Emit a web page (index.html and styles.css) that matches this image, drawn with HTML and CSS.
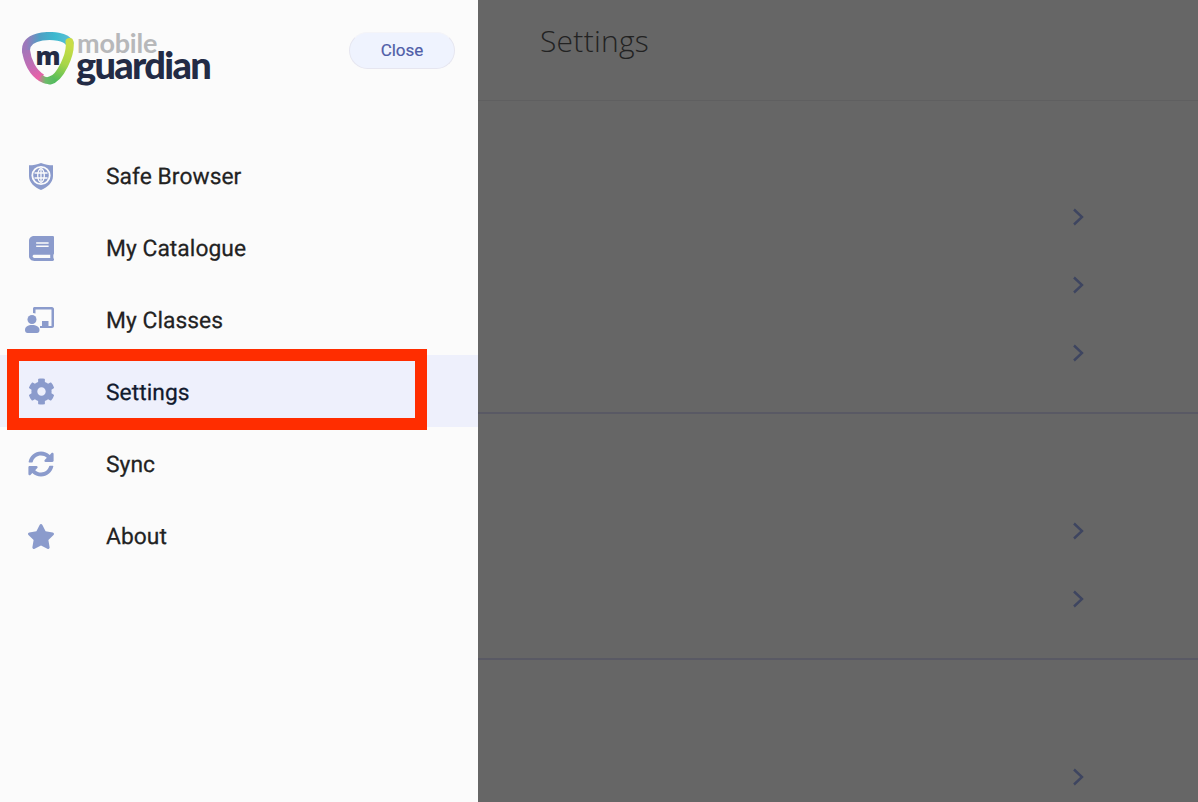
FILE: index.html
```html
<!DOCTYPE html>
<html lang="en">
<head>
<meta charset="utf-8">
<title>Settings</title>
<link rel="stylesheet" href="styles.css">
</head>
<body>
<div class="app">
  <aside class="drawer">
    <header class="drawer-head">
      <div class="logo">
        <div class="mark">
          <svg class="mark-svg" viewBox="0 0 52 53" width="52" height="53" fill="none">
            <defs>
              <linearGradient id="gl" gradientUnits="userSpaceOnUse" x1="5" y1="12" x2="20" y2="46"><stop offset="0" stop-color="#9d78bb"/><stop offset=".6" stop-color="#c26cb4"/><stop offset="1" stop-color="#ee5fa6"/></linearGradient>
              <linearGradient id="gt" gradientUnits="userSpaceOnUse" x1="4" y1="10" x2="48" y2="12"><stop offset="0" stop-color="#9d78bb"/><stop offset=".3" stop-color="#4f9fc4"/><stop offset=".65" stop-color="#3cb9cf"/><stop offset="1" stop-color="#5bbfd4"/></linearGradient>
              <linearGradient id="gr" gradientUnits="userSpaceOnUse" x1="46" y1="12" x2="30" y2="48"><stop offset="0" stop-color="#c9dd45"/><stop offset=".5" stop-color="#a8d648"/><stop offset="1" stop-color="#4fbb5c"/></linearGradient>
              <linearGradient id="gb" gradientUnits="userSpaceOnUse" x1="16" y1="44" x2="36" y2="46"><stop offset="0" stop-color="#ee5fa6"/><stop offset=".4" stop-color="#6dbb6a"/><stop offset="1" stop-color="#4fbb5c"/></linearGradient>
            </defs>
            <path d="M4 19C3.500 10 11 6 20 4.500C30 3 44 4.500 47.500 11" stroke="url(#gt)" stroke-width="8" stroke-linecap="round"/>
            <path d="M4 18C5 29 11 41 20 46" stroke="url(#gl)" stroke-width="8"/>
            <path d="M47.500 10C49.500 22 38 46.500 28 48.500" stroke="url(#gr)" stroke-width="8" stroke-linecap="round"/>
            <path d="M18 45.500C22 48.500 27 50 32 47" stroke="url(#gb)" stroke-width="6.500"/>
          </svg>
          <span class="mark-m">m</span>
        </div>
        <div class="wordmark">
          <span class="word-top">mobile</span>
          <span class="word-bottom">guardian</span>
        </div>
      </div>
      <button class="close-btn" type="button">Close</button>
    </header>
    <nav class="menu">
      <a class="item">
        <span class="item-icon">
          <svg viewBox="0 0 24 27" width="24" height="27">
            <path class="ic" d="M12 0C8 1.800 4 2.200 0 2.300V13C0 20 6 24.500 12 27C18 24.500 24 20 24 13V2.300C20 2.200 16 1.800 12 0Z"/>
            <g fill="none" stroke="#fbfbfb" stroke-width="1.300">
              <circle cx="12" cy="12.500" r="8.700" stroke-width="1.800"/>
              <ellipse cx="12" cy="12.500" rx="3.300" ry="6.800"/>
              <path d="M5.500 10H18.500M5.500 15H18.500M12 5.500V19.500"/>
            </g>
          </svg>
        </span>
        <span class="item-label">Safe Browser</span>
      </a>
      <a class="item">
        <span class="item-icon">
          <svg viewBox="0 0 448 512" width="25" height="25" preserveAspectRatio="none">
            <path class="ic" d="M448 360V24c0-13.300-10.700-24-24-24H96C43 0 0 43 0 96v320c0 53 43 96 96 96h328c13.300 0 24-10.700 24-24v-16c0-7.500-3.500-14.300-8.900-18.700-4.200-15.400-4.200-59.300 0-74.700 5.400-4.300 8.900-11.100 8.900-18.600zM128 134c0-3.300 2.700-6 6-6h212c3.300 0 6 2.700 6 6v20c0 3.300-2.700 6-6 6H134c-3.300 0-6-2.700-6-6v-20zm0 64c0-3.300 2.700-6 6-6h212c3.300 0 6 2.700 6 6v20c0 3.300-2.700 6-6 6H134c-3.300 0-6-2.700-6-6v-20zm253.400 250H96c-17.700 0-32-14.300-32-32 0-17.600 14.400-32 32-32h285.400c-1.900 17.100-1.900 46.900 0 64z"/>
          </svg>
        </span>
        <span class="item-label">My Catalogue</span>
      </a>
      <a class="item">
        <span class="item-icon">
          <svg viewBox="0 0 32 26" width="32" height="26">
            <path class="ic" d="M8 1.500C8 .7 8.700 0 9.500 0H27C28 0 29 1 29 2V19C29 20 28 21 27 21H15V19H26.500V2.500H10.500V6.500C9.700 6.200 8.800 6 8 6Z"/>
            <rect class="ic" x="17" y="14" width="6.500" height="5"/>
            <circle class="ic" cx="7" cy="12.500" r="4.500"/>
            <path class="ic" d="M0 23C0 19.500 3 18 7 18S14.500 19.500 14.500 23C14.500 25 13.500 26 12 26H2.500C1 26 0 25 0 23Z"/>
          </svg>
        </span>
        <span class="item-label">My Classes</span>
      </a>
      <a class="item item-active">
        <span class="item-icon item-icon-up">
          <svg viewBox="0 0 512 512" width="27" height="27">
            <path class="ic" d="M487.400 315.700l-42.600-24.600c4.300-23.200 4.300-47 0-70.200l42.600-24.600c4.900-2.800 7.100-8.600 5.500-14-11.100-35.600-30-67.800-54.700-94.600-3.800-4.100-10-5.100-14.800-2.300L380.800 110c-17.900-15.400-38.500-27.300-60.800-35.100V25.800c0-5.600-3.900-10.500-9.400-11.700-36.700-8.200-74.300-7.800-109.200 0-5.500 1.200-9.400 6.100-9.400 11.700V75c-22.200 7.900-42.800 19.800-60.800 35.100L88.700 85.500c-4.900-2.800-11-1.900-14.800 2.300-24.700 26.700-43.600 58.900-54.700 94.600-1.700 5.400.6 11.200 5.500 14L67.300 221c-4.300 23.200-4.300 47 0 70.200l-42.600 24.600c-4.900 2.800-7.100 8.600-5.500 14 11.100 35.600 30 67.800 54.700 94.600 3.800 4.100 10 5.100 14.800 2.300l42.600-24.600c17.900 15.400 38.500 27.300 60.800 35.100v49.200c0 5.600 3.900 10.500 9.400 11.700 36.700 8.200 74.300 7.800 109.200 0 5.500-1.200 9.400-6.100 9.400-11.700v-49.200c22.200-7.900 42.800-19.800 60.800-35.100l42.600 24.600c4.900 2.800 11 1.900 14.800-2.300 24.700-26.700 43.600-58.900 54.700-94.600 1.500-5.500-.7-11.300-5.600-14.100zM256 336c-44.100 0-80-35.900-80-80s35.900-80 80-80 80 35.900 80 80-35.900 80-80 80z"/>
          </svg>
        </span>
        <span class="item-label">Settings</span>
        <span class="callout"></span>
      </a>
      <a class="item">
        <span class="item-icon">
          <svg viewBox="0 0 512 512" width="26" height="26">
            <path class="ic" d="M370.720 133.280C339.458 104.008 298.888 87.962 255.848 88c-77.458.068-144.328 53.178-162.791 126.850-1.344 5.363-6.122 9.150-11.651 9.150H24.103c-7.498 0-13.194-6.807-11.807-14.176C33.933 94.924 134.813 8 256 8c66.448 0 126.791 26.136 171.315 68.685L463.030 40.970C478.149 25.851 504 36.559 504 57.941V192c0 13.255-10.745 24-24 24H345.941c-21.382 0-32.090-25.851-16.971-40.971l41.750-41.749zM32 296h134.059c21.382 0 32.090 25.851 16.971 40.971l-41.750 41.750c31.262 29.273 71.835 45.319 114.876 45.280 77.418-.07 144.315-53.144 162.787-126.849 1.344-5.363 6.122-9.150 11.651-9.150h57.304c7.498 0 13.194 6.807 11.807 14.176C478.067 417.076 377.187 504 256 504c-66.448 0-126.791-26.136-171.315-68.685L48.970 471.030C33.851 486.149 8 475.441 8 454.059V320c0-13.255 10.745-24 24-24z"/>
          </svg>
        </span>
        <span class="item-label">Sync</span>
      </a>
      <a class="item">
        <span class="item-icon">
          <svg viewBox="0 0 576 512" width="28" height="25">
            <path class="ic" d="M259.300 17.800L194 150.200 47.900 171.500c-26.200 3.800-36.700 36.100-17.700 54.600l105.700 103-25 145.500c-4.500 26.300 23.200 46 46.400 33.700L288 439.600l130.700 68.700c23.200 12.200 50.900-7.400 46.400-33.700l-25-145.500 105.700-103c19-18.500 8.500-50.800-17.700-54.600L382 150.200 316.700 17.800c-11.700-23.600-45.600-23.900-57.400 0z"/>
          </svg>
        </span>
        <span class="item-label">About</span>
      </a>
    </nav>
  </aside>
  <main class="content">
    <header class="content-head"><h1 class="title">Settings</h1></header>
    <section class="group">
      <div class="row"><svg class="chev" viewBox="0 0 12 18" width="12" height="18"><path d="M2 1.500L10 9L2 16.500"/></svg></div>
      <div class="row"><svg class="chev" viewBox="0 0 12 18" width="12" height="18"><path d="M2 1.500L10 9L2 16.500"/></svg></div>
      <div class="row"><svg class="chev" viewBox="0 0 12 18" width="12" height="18"><path d="M2 1.500L10 9L2 16.500"/></svg></div>
    </section>
    <section class="group group-next">
      <div class="row"><svg class="chev" viewBox="0 0 12 18" width="12" height="18"><path d="M2 1.500L10 9L2 16.500"/></svg></div>
      <div class="row"><svg class="chev" viewBox="0 0 12 18" width="12" height="18"><path d="M2 1.500L10 9L2 16.500"/></svg></div>
    </section>
    <section class="group group-next group-last">
      <div class="row"><svg class="chev" viewBox="0 0 12 18" width="12" height="18"><path d="M2 1.500L10 9L2 16.500"/></svg></div>
    </section>
  </main>
</div>
</body>
</html>
```
FILE: styles.css
```css
* { box-sizing: border-box; }
html, body { margin: 0; height: 100%; overflow: hidden; }
body { font-family: "Roboto", "Liberation Sans", sans-serif; background: #666; }
.app { display: flex; width: 1198px; height: 802px; overflow: hidden; }

.drawer { width: 478px; flex: none; background: #fbfbfb; }
.drawer-head { height: 139px; padding: 32px 23px 0 22px; display: flex; justify-content: space-between; align-items: flex-start; }

.logo { display: flex; width: 190px; }
.mark { position: relative; width: 52px; height: 53px; flex: none; }
.mark-svg { display: block; }
.mark-m { position: absolute; left: 0; right: 0; top: 3px; text-align: center; font: 800 25px/40px "Open Sans", sans-serif; color: #232b45; }
.wordmark { display: flex; flex-direction: column; margin-left: 3px; }
.word-top { font: 700 27px/22px "Lato", sans-serif; color: #b7b8ba; letter-spacing: -.2px; }
.word-bottom { font: 900 38px/20px "Lato", sans-serif; color: #232b45; letter-spacing: -1.7px; margin-left: -1px; }

.close-btn { width: 106px; height: 37px; padding: 0 0 2px; border: 1px solid #e6e6f0; border-top-color: #f4f4f8; border-radius: 19px; background: #eff3fe; color: #4f5ea8; font: 400 17px "Roboto", sans-serif; -webkit-text-stroke: .2px #4f5ea8; }

.menu { display: flex; flex-direction: column; }
.item { position: relative; height: 72px; padding: 2px 0 0 21px; display: flex; align-items: center; }
.item-active { background: #eef0fc; }
.item-icon { width: 40px; height: 40px; flex: none; margin-right: 45px; display: flex; align-items: center; justify-content: center; }
.item-icon-up { padding-bottom: 1px; }
.item-icon svg { display: block; }
.ic { fill: #8b9bcc; }
.item-label { font-size: 22.800px; font-weight: 400; letter-spacing: .05px; color: #222; text-rendering: geometricPrecision; -webkit-text-stroke: .25px #222; }
.item-active .item-label { color: #111a2e; -webkit-text-stroke-color: #111a2e; }
.callout { position: absolute; left: 6.700px; top: -6px; width: 420.700px; height: 81px; border: 12.500px solid #ff2d00; }

.content { flex: 1; min-width: 0; background: #666; }
.content-head { height: 101px; padding: 23px 0 0 62px; border-bottom: 1px solid #5f5f60; }
.title { margin: 0; font: 300 30px/36px "Open Sans", sans-serif; letter-spacing: .25px; color: #222; }
.group { padding: 82px 0 25px; border-bottom: 2px solid #595964; }
.group-next { padding-top: 83px; }
.group-last { border-bottom: 0; }
.row { height: 68px; padding-right: 114px; display: flex; align-items: center; justify-content: flex-end; }
.chev { fill: none; stroke: #3e4560; stroke-width: 2.400; display: block; }
```
